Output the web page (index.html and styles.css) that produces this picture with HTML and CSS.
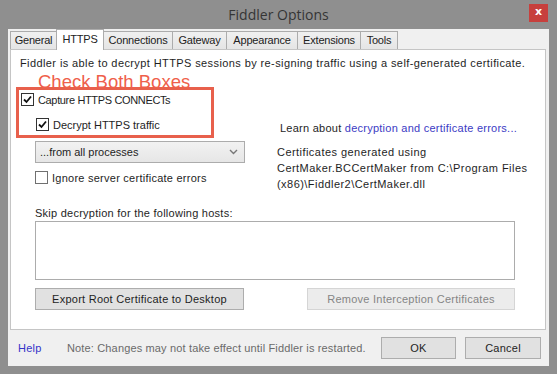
FILE: index.html
```html
<!DOCTYPE html>
<html>
<head>
<meta charset="utf-8">
<link rel="stylesheet" href="styles.css">
</head>
<body>
<div class="window">
  <div class="titlebar">
    <div class="title">Fiddler Options</div>
    <div class="close">x</div>
  </div>
  <div class="client">
    <div class="tabs">
      <div class="tab t-general">General</div>
      <div class="tab t-https active">HTTPS</div>
      <div class="tab t-conn">Connections</div>
      <div class="tab t-gate">Gateway</div>
      <div class="tab t-appear">Appearance</div>
      <div class="tab t-ext">Extensions</div>
      <div class="tab t-tools">Tools</div>
    </div>
    <div class="panel">
      <div class="annot">Check Both Boxes</div>
      <div class="redbox"></div>
      <div class="desc">Fiddler is able to decrypt HTTPS sessions by re-signing traffic using a self-generated certificate.</div>
      <div class="check row1">
        <span class="box"><svg width="11" height="11" viewBox="0 0 11 11"><path d="M2 5.5 L4.5 8 L9 2.5" fill="none" stroke="#111" stroke-width="1.8"/></svg></span>
        <span class="lbl-capture">Capture HTTPS CONNECTs</span>
      </div>
      <div class="rowA">
        <div class="check row2">
          <span class="box"><svg width="11" height="11" viewBox="0 0 11 11"><path d="M2 5.5 L4.5 8 L9 2.5" fill="none" stroke="#111" stroke-width="1.8"/></svg></span>
          <span class="lbl-decrypt">Decrypt HTTPS traffic</span>
        </div>
        <div class="learn">Learn about <span class="link">decryption and certificate errors...</span></div>
      </div>
      <div class="rowB">
        <div class="leftcol">
          <div class="combo"><span>...from all processes</span><svg width="9" height="6" viewBox="0 0 9 6"><path d="M1 1 L4.5 4.5 L8 1" fill="none" stroke="#777" stroke-width="1.4"/></svg></div>
          <div class="check row3">
            <span class="box"></span>
            <span>Ignore server certificate errors</span>
          </div>
        </div>
        <div class="certs">Certificates generated using<br>CertMaker.BCCertMaker from C:\Program Files<br>(x86)\Fiddler2\CertMaker.dll</div>
      </div>
      <div class="skip">Skip decryption for the following hosts:</div>
      <div class="hosts"></div>
      <div class="btnrow">
        <div class="btn export">Export Root Certificate to Desktop</div>
        <div class="btn remove">Remove Interception Certificates</div>
      </div>
    </div>
    <div class="footer">
      <span class="help">Help</span>
      <span class="note">Note: Changes may not take effect until Fiddler is restarted.</span>
      <div class="btn ok">OK</div>
      <div class="btn cancel">Cancel</div>
    </div>
  </div>
</div>
</body>
</html>
```

FILE: styles.css
```css
* { box-sizing: border-box; }
html, body { margin: 0; padding: 0; }
body {
  width: 557px;
  height: 374px;
  background: #8f8f8f;
  font-family: "Liberation Sans", Arial, sans-serif;
  font-size: 11px;
  letter-spacing: 0.25px;
  color: #1e1e1e;
  overflow: hidden;
}
.window {
  position: relative;
  width: 557px;
  height: 374px;
  padding: 29px 8px 8px 8px;
}
.titlebar {
  position: absolute;
  left: 0; top: 0;
  width: 557px;
  height: 29px;
}
.title {
  text-align: center;
  font-family: "Open Sans", "Noto Sans", sans-serif;
  font-size: 14px;
  letter-spacing: 0;
  line-height: 29px;
  color: #353535;
}
.close {
  position: absolute;
  top: 4px;
  left: 529px;
  width: 19px;
  height: 18px;
  background: #c7403d;
  color: #fff;
  font-family: "DejaVu Sans", sans-serif;
  font-weight: bold;
  font-size: 11px;
  letter-spacing: 0;
  line-height: 16px;
  text-align: center;
}
.client {
  width: 541px;
  height: 337px;
  background: #f0f0f0;
  padding: 0 0 0 2px;
  display: flex;
  flex-direction: column;
}
.tabs {
  display: flex;
  align-items: flex-end;
  height: 21px;
  position: relative;
  z-index: 2;
}
.tab {
  height: 18px;
  border: 1px solid #acacac;
  border-bottom: none;
  margin-right: -1px;
  margin-bottom: 1px;
  background: linear-gradient(#f0f0f0, #e5e5e5);
  line-height: 17px;
  text-align: center;
  letter-spacing: -0.2px;
  color: #222;
}
.tab.active {
  height: 21px;
  background: #fff;
  margin-bottom: 0;
  position: relative;
  z-index: 3;
  line-height: 18px;
}
.t-general { width: 47px; }
.t-https { width: 48px; }
.t-conn { width: 70px; }
.t-gate { width: 55px; }
.t-appear { width: 72px; }
.t-ext { width: 64px; }
.t-tools { width: 38px; }
.panel {
  position: relative;
  width: 536px;
  height: 281px;
  margin-top: -1px;
  background: #fff;
  border: 1px solid #c5c5c5;
  padding: 6px 0 0 9px;
  z-index: 1;
}
.desc { line-height: 14px; white-space: nowrap; letter-spacing: 0.4px; }
.annot {
  position: absolute;
  left: 27px;
  top: 22px;
  font-family: "Liberation Sans", Arial, sans-serif;
  font-size: 18.5px;
  letter-spacing: 0;
  color: #ef5f4b;
  line-height: 20px;
  z-index: 2;
}
.redbox {
  position: absolute;
  left: 5px;
  top: 37px;
  width: 198px;
  height: 51px;
  border: 3px solid #e8604c;
}
.check {
  display: flex;
  align-items: center;
  height: 13px;
  white-space: nowrap;
}
.box {
  width: 13px;
  height: 13px;
  border: 1px solid #333;
  background: #fff;
  display: inline-flex;
  align-items: center;
  justify-content: center;
  margin-right: 4px;
  flex: none;
}
.row3 .box { border-color: #707070; }
.lbl-capture { letter-spacing: -0.35px; }
.lbl-decrypt { letter-spacing: 0; }
.row1 { margin-top: 23px; padding-left: 1px; }
.rowA {
  display: flex;
  align-items: flex-start;
  margin-top: 12px;
}
.row2 { padding-left: 16px; width: 260px; }
.learn { margin-top: 3px; line-height: 14px; }
.link { color: #3b3bc4; }
.rowB {
  display: flex;
  margin-top: 6px;
  padding-left: 15px;
}
.leftcol { width: 242px; }
.combo {
  width: 210px;
  height: 22px;
  border: 1px solid #acacac;
  background: linear-gradient(#f2f2f2, #e6e6e6);
  display: flex;
  align-items: center;
  justify-content: space-between;
  padding: 0 6px 0 4px;
  letter-spacing: 0;
}
.row3 { margin-top: 8px; }
.certs { line-height: 16px; margin-top: 3px; letter-spacing: 0.45px; }
.skip { margin-top: 14px; padding-left: 15px; line-height: 14px; }
.hosts {
  margin: 1px 0 0 15px;
  width: 480px;
  height: 59px;
  border: 1px solid #acacac;
}
.btnrow {
  display: flex;
  justify-content: space-between;
  margin: 8px 0 0 15px;
  width: 480px;
}
.btn {
  height: 22px;
  border: 1px solid #adadad;
  background: #e1e1e1;
  text-align: center;
  line-height: 20px;
  color: #1e1e1e;
}
.export { width: 209px; }
.remove { width: 208px; border-color: #d5d5d5; background: #ececec; color: #858585; }
.footer {
  display: flex;
  align-items: center;
  height: 36px;
  padding-left: 8px;
}
.help { color: #3434c8; width: 49px; }
.note { color: #6a6a6a; width: 314px; white-space: nowrap; letter-spacing: 0.15px; }
.ok { width: 75px; }
.cancel { width: 76px; margin-left: 9px; }
```
